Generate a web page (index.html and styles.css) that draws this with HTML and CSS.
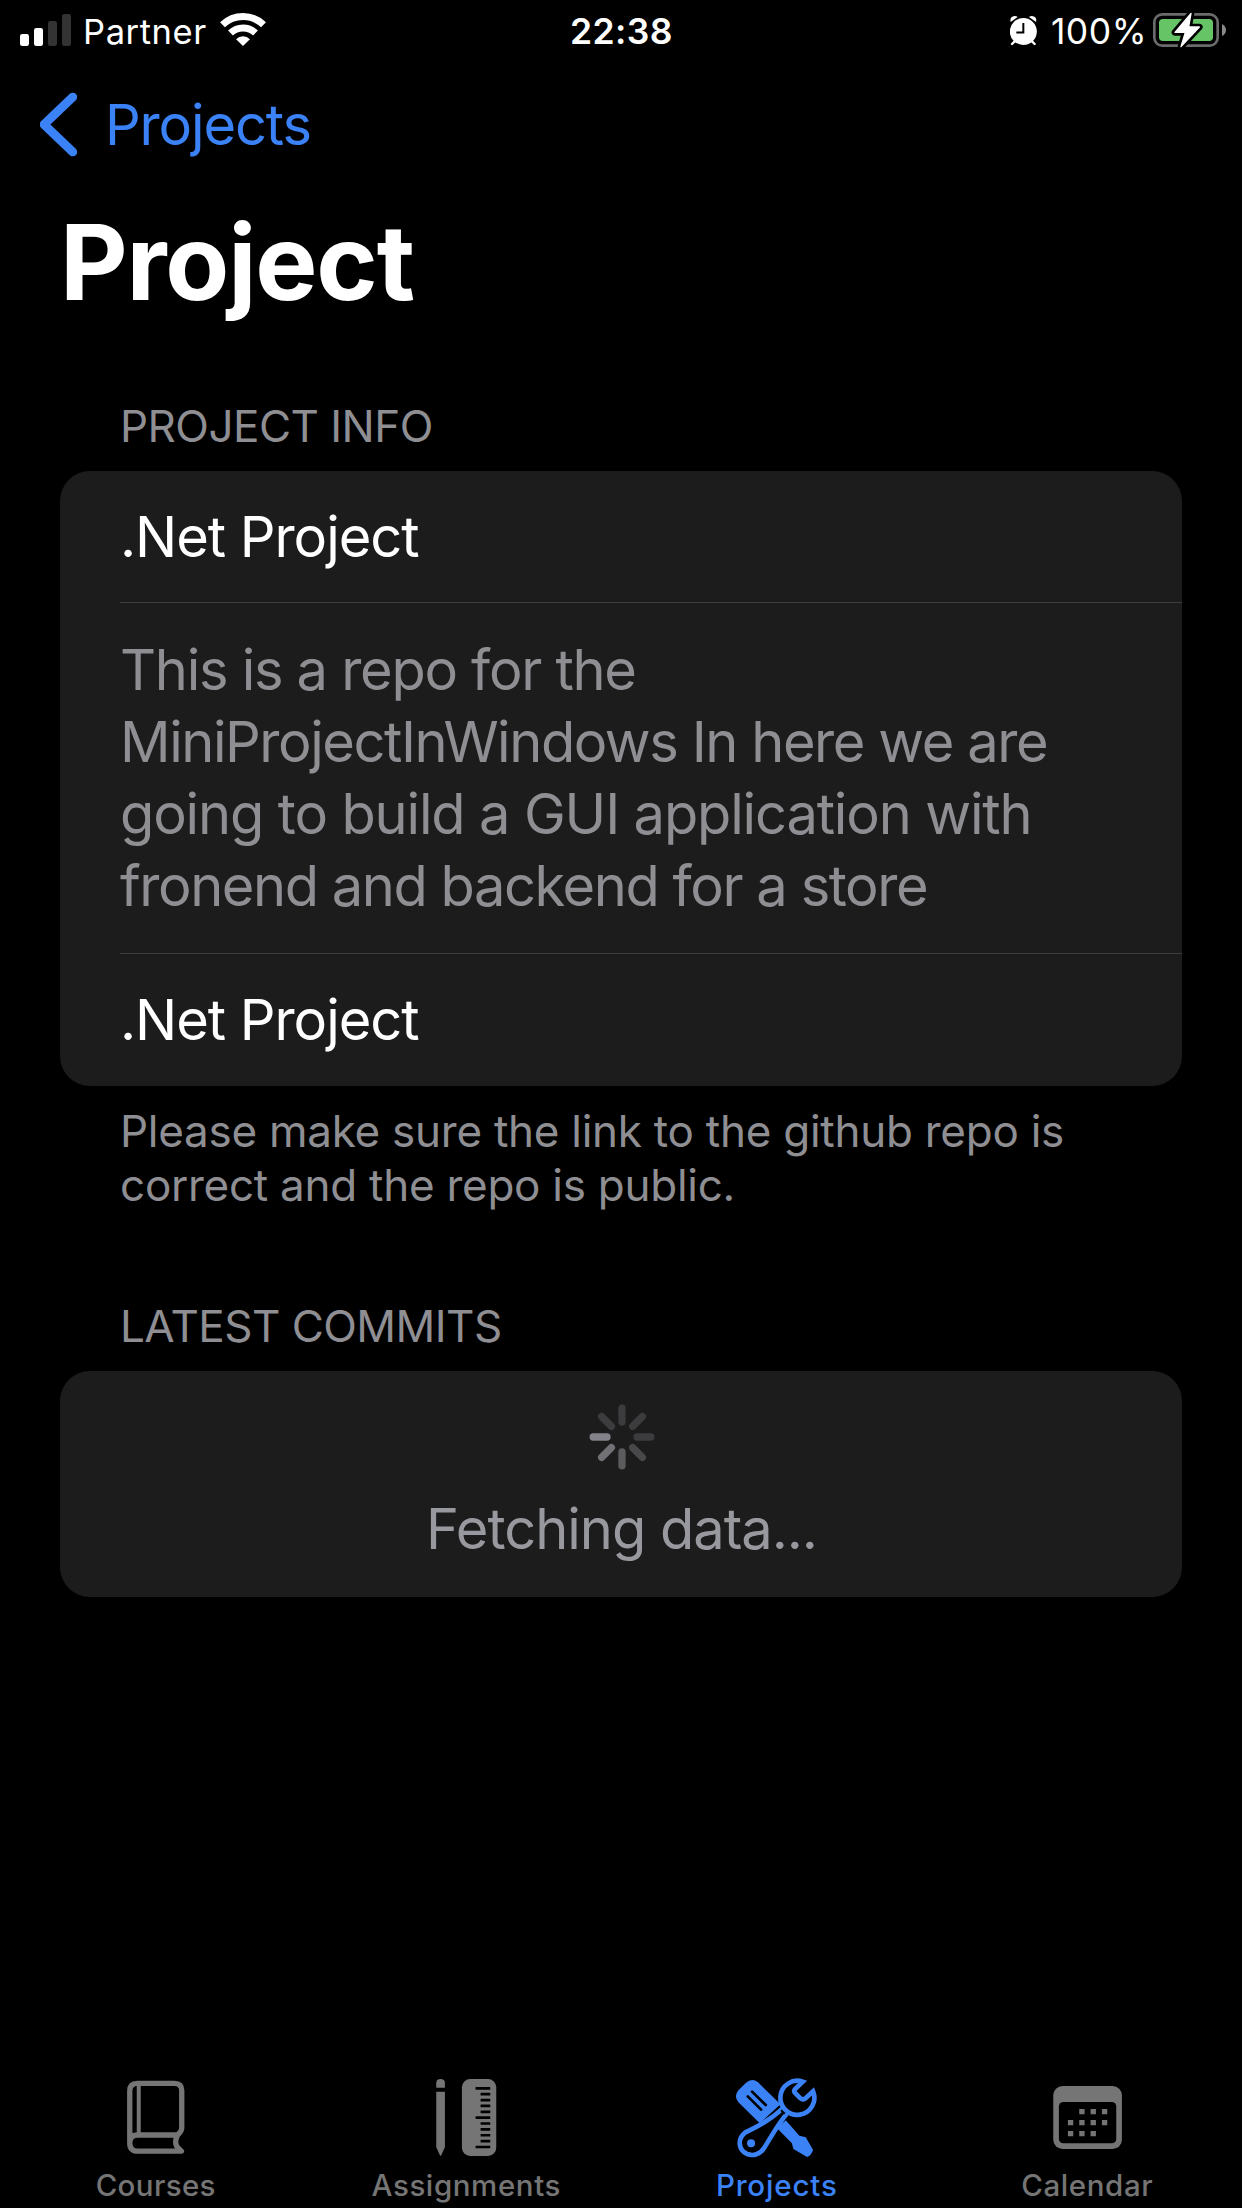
FILE: index.html
```
<!DOCTYPE html>
<html lang="en">
<head>
<meta charset="utf-8">
<title>Project</title>
<link rel="stylesheet" href="styles.css">
</head>
<body>
<div class="screen">
  <div class="status">
    <div class="status-left">
      <svg class="signal" viewBox="60 0 153 189">
        <rect x="60" y="102" width="27" height="36" rx="7" fill="#fff"/>
        <rect x="102" y="84" width="27" height="54" rx="7" fill="#fff"/>
        <rect x="144" y="63" width="27" height="75" rx="7" fill="#333"/>
        <rect x="186" y="42" width="27" height="96" rx="7" fill="#333"/>
      </svg>
      <span class="carrier">Partner</span>
      <svg class="wifi" viewBox="660 0 138 189" fill="none" stroke="#fff">
        <path d="M667.5 74.4A88.5 88.5 0 0 1 790.5 74.4" stroke-width="21"/>
        <path d="M691.5 99.2A54 54 0 0 1 766.5 99.2" stroke-width="21"/>
        <path d="M708.2 117.4A30 30 0 0 1 749.8 117.4L729 138Z" fill="#fff" stroke="none"/>
      </svg>
    </div>
    <div class="clock">22:38</div>
    <div class="status-right">
      <svg class="alarm" viewBox="90 0 81 189">
        <circle cx="130" cy="94.500" r="40.500" fill="#fff"/>
        <path d="M92 66Q88 50 104 48Q110 48 113 51ZM168 66Q172 50 156 48Q150 48 147 51Z" fill="#fff"/>
        <path d="M104 124L96 132M156 124L164 132" stroke="#fff" stroke-width="7" stroke-linecap="round"/>
        <path d="M130 69V97.500H109" fill="none" stroke="#000" stroke-width="6"/>
      </svg>
      <span class="percent">100%</span>
      <svg class="battery" viewBox="519 0 219 189">
        <rect x="523" y="43" width="190" height="94" rx="24" fill="none" stroke="#6b6b6b" stroke-width="8"/>
        <rect x="537" y="57" width="162" height="66" rx="12" fill="#67c466"/>
        <path d="M726 72Q738 79 738 90Q738 102 726 108Z" fill="#8a8a8a"/>
        <path d="M633 40L585 97H616L603 140L658 81H626Z" fill="#fff" stroke="#000" stroke-width="20" stroke-linejoin="round"/>
        <path d="M633 40L585 97H616L603 140L658 81H626Z" fill="#fff" stroke="#fff" stroke-width="4" stroke-linejoin="round"/>
      </svg>
    </div>
  </div>

  <div class="nav">
    <svg class="chevron" viewBox="120 273 111 198"><path d="M218.500 291L132 373.500L218.500 456" fill="none" stroke="#3b82f7" stroke-width="26" stroke-linecap="round" stroke-linejoin="round"/></svg>
    <span class="back">Projects</span>
  </div>
  <h1 class="title">Project</h1>

  <section class="group group-info">
    <h2 class="group-head">PROJECT INFO</h2>
    <div class="card">
      <div class="row row-first">.Net Project</div>
      <div class="row row-text">This is a repo for the<br><span class="tight">MiniProjectInWindows In here we are</span><br><span class="loose">going to build a GUI application with</span><br><span class="tight">fronend and backend for a store</span></div>
      <div class="row row-last">.Net Project</div>
    </div>
    <p class="group-foot">Please make sure the link to the github repo is<br>correct and the repo is public.</p>
  </section>

  <section class="group group-commits">
    <h2 class="group-head commits-head">LATEST COMMITS</h2>
    <div class="card loading">
      <svg class="spinner" viewBox="-33 -33 66 66" stroke-width="7.300" stroke-linecap="round">
        <path d="M0 -15V-28.800" stroke="#3c3c3e"/>
        <path d="M0 -15V-28.800" stroke="#3c3c3e" transform="rotate(45)"/>
        <path d="M0 -15V-28.800" stroke="#3c3c3e" transform="rotate(90)"/>
        <path d="M0 -15V-28.800" stroke="#48484a" transform="rotate(135)"/>
        <path d="M0 -15V-28.800" stroke="#5c5c5f" transform="rotate(180)"/>
        <path d="M0 -15V-28.800" stroke="#707075" transform="rotate(225)"/>
        <path d="M0 -15V-28.800" stroke="#838288" transform="rotate(270)"/>
        <path d="M0 -15V-28.800" stroke="#3c3c3e" transform="rotate(315)"/>
      </svg>
      <div class="loading-text">Fetching data...</div>
    </div>
  </section>

  <nav class="tabs">
    <div class="tab">
      <svg class="tab-icon" viewBox="75.750 30 300 288" fill="none" stroke="#757575" stroke-width="16" stroke-linejoin="round">
        <path d="M150 250V93Q150 70 173 70H284Q306 70 306 92V204Q306 211 301 217C285 231 284 252 295 264L305 273.500H174Q150 273.500 150 249Q150 225 174 225H297"/>
        <path d="M177 72V222" stroke-width="12"/>
      </svg>
      <span class="tab-label label-courses">Courses</span>
    </div>
    <div class="tab">
      <svg class="tab-icon" viewBox="167.250 30 300 288" fill="#757575">
        <path d="M228 83V69Q228 57 241 57Q254 57 254 69V83ZM228 95H254V262L243 286Q241 289 239 286L228 262Z"/>
        <rect x="305" y="57" width="103" height="231" rx="25"/>
        <path d="M346 85H390M346 173H390M346 261H390M361 102.600H390M361 120.200H390M361 137.800H390M361 155.400H390M361 190.600H390M361 208.200H390M361 225.800H390M361 243.400H390" stroke="#000" stroke-width="8"/>
      </svg>
      <span class="tab-label label-assignments">Assignments</span>
    </div>
    <div class="tab active">
      <svg class="tab-icon" viewBox="78.750 30 300 288">
        <path d="M180 190L116 127Q101 109 116 91L138 69Q156 52 175 67L242 133ZM232 205L258 181L299 227L318 232L340 270Q335 286 322 291L281 267L276 249Z" fill="#3b82f7"/>
        <path d="M144 109L184 149M157 95L198 135" stroke="#000" stroke-width="8" stroke-linecap="round"/>
        <path d="M249 145L263 159C232 195 212 235 193 264C182 283 160 289 142 282C115 270 112 236 137 217C164 203 201 190 249 145Z" fill="#000" stroke="#3b82f7" stroke-width="14"/>
        <path d="M309 65A51 51 0 1 0 340 94L316 116Q309 121 302 115L286 99Q281 93 286 87Z" fill="#000" stroke="#3b82f7" stroke-width="14" stroke-linejoin="miter"/>
        <path d="M244 151L255 161" stroke="#000" stroke-width="6"/>
        <circle cx="154" cy="250" r="12" fill="#3b82f7"/>
      </svg>
      <span class="tab-label label-projects">Projects</span>
    </div>
    <div class="tab">
      <svg class="tab-icon" viewBox="80.250 30 300 288" fill="#757575">
        <rect x="129" y="78" width="206" height="189" rx="28"/>
        <rect x="146" y="126" width="172" height="124" rx="13" fill="#000"/>
        <path d="M207 147h16v16h-16zM241 147h16v16h-16zM275 147h16v16h-16zM173 180h16v16h-16zM207 180h16v16h-16zM241 180h16v16h-16zM275 180h16v16h-16zM173 213h16v16h-16zM207 213h16v16h-16zM241 213h16v16h-16z"/>
      </svg>
      <span class="tab-label label-calendar">Calendar</span>
    </div>
  </nav>
</div>
</body>
</html>
```

FILE: styles.css
```
* { box-sizing: border-box; }
body { margin: 0; background: #000; }
svg { display: block; flex: none; }
.screen {
  width: 1242px;
  height: 2208px;
  display: flex;
  flex-direction: column;
  background: #000;
  color: #fff;
  font-family: Inter, "Liberation Sans", sans-serif;
  white-space: nowrap;
  overflow: hidden;
}

.status {
  height: 63px;
  padding: 0 16px 0 20px;
  display: grid;
  grid-template-columns: 551px auto 1fr;
  align-items: center;
}
.status-left, .status-right { display: flex; align-items: center; }
.status-right { justify-content: flex-end; }
.signal { width: 51px; height: 63px; }
.carrier { margin-left: 12px; font-size: 34.5px; letter-spacing: 0.6px; }
.wifi { width: 46px; height: 63px; margin-left: 13px; }
.clock { font-size: 35.5px; font-weight: 600; letter-spacing: 0.4px; margin-left: -1px; }
.alarm { width: 27px; height: 63px; }
.percent { margin: 0 6px 0 14px; font-size: 35.5px; letter-spacing: 0.5px; }
.battery { width: 73px; height: 63px; }

.nav { height: 122px; padding-left: 40px; display: flex; align-items: center; }
.chevron { width: 37px; height: 66px; }
.back { margin-left: 28px; padding-top: 1px; font-size: 56px; letter-spacing: -1.15px; color: #3b82f7; }
.title {
  margin: 0;
  padding-left: 60px;
  font-size: 104.5px;
  line-height: 154px;
  font-weight: 700;
  letter-spacing: -1.2px;
}

.group { padding: 0 60px; }
.group-info { padding-top: 60px; }
.group-commits { padding-top: 87px; }
.group-head {
  margin: 0;
  padding: 0 60px 18px;
  font-size: 44px;
  line-height: 54px;
  font-weight: 400;
  letter-spacing: -0.53px;
  color: #8e8e93;
}
.group-foot {
  margin: 0;
  padding: 18px 60px 0;
  font-size: 44px;
  line-height: 54px;
  letter-spacing: -0.26px;
  color: #8e8e93;
}
.card { background: #1c1c1c; border-radius: 30px; padding-left: 60px; }
.row {
  border-bottom: 1px solid #3d3d41;
  font-size: 56px;
  letter-spacing: -1.05px;
}
.row-first { padding-top: 1px; line-height: 130px; }
.row-text {
  padding: 31px 0;
  line-height: 72px;
  letter-spacing: -1.3px;
  color: #8e8e93;
}
.tight { letter-spacing: -1.44px; }
.loose { letter-spacing: -1.15px; }
.row-last { border-bottom: 0; line-height: 132px; }
.loading {
  height: 226px;
  padding: 33px 0 0 1px;
  display: flex;
  flex-direction: column;
  align-items: center;
}
.spinner { width: 66px; height: 66px; }
.loading-text {
  margin-top: 23px;
  font-size: 56px;
  line-height: 72px;
  letter-spacing: -1.02px;
  color: #98989f;
}

.tabs {
  margin-top: auto;
  height: 138px;
  display: grid;
  grid-template-columns: repeat(4, 1fr);
  color: #757575;
}
.tab { display: flex; flex-direction: column; align-items: center; }
.tab-icon { width: 100px; height: 96px; }
.tab-label { margin-top: 1px; padding-left: 1px; font-size: 29.5px; line-height: 36px; font-weight: 500; }
.label-courses { letter-spacing: 0.36px; }
.label-assignments { letter-spacing: 0.59px; }
.label-projects { letter-spacing: 0.83px; }
.label-calendar { letter-spacing: 0.59px; }
.active { color: #3b82f7; }
```
